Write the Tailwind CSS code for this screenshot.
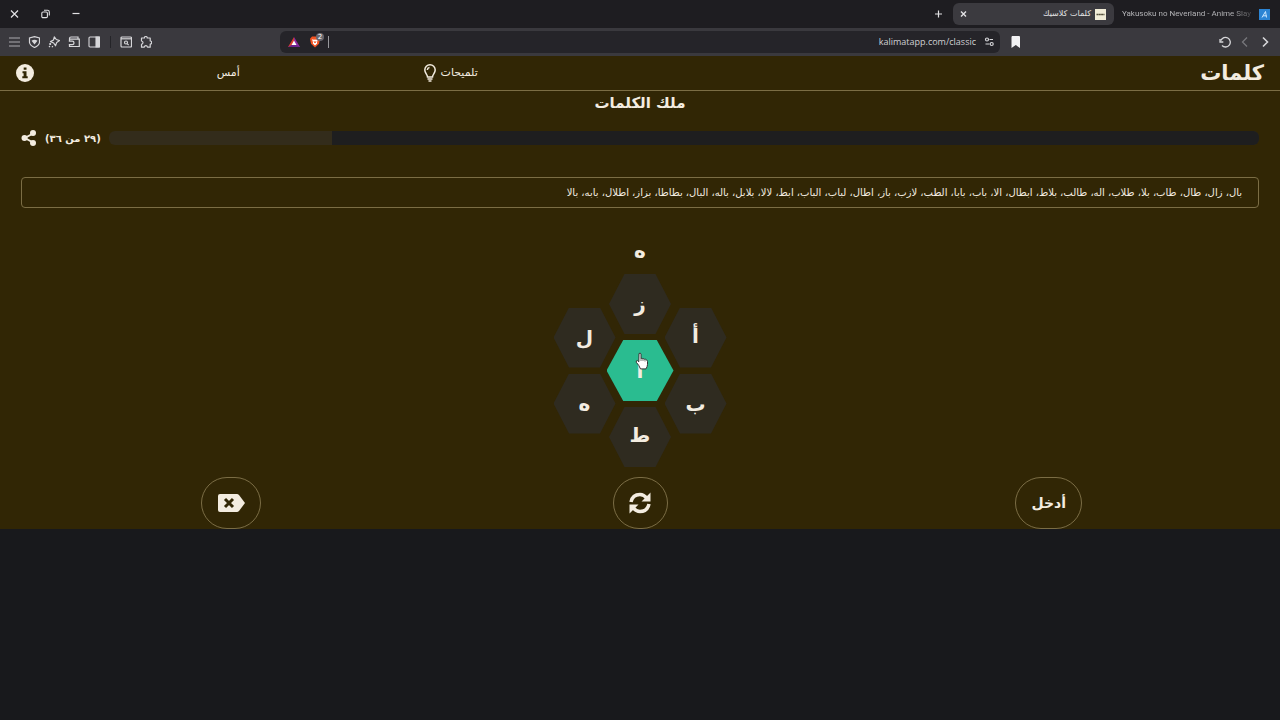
<!DOCTYPE html>
<html lang="ar" dir="rtl">
<head>
<meta charset="utf-8">
<meta name="viewport" content="width=device-width, initial-scale=1">
<title>كلمات كلاسيك</title>
<script src="https://cdn.jsdelivr.net/npm/@tailwindcss/browser@4"></script>
</head>
<body class="min-h-screen bg-[#18191c] font-['DejaVu_Sans',sans-serif] text-[#f3ece0]">

<!-- Tab strip -->
<div dir="ltr" class="flex h-7 items-center bg-[#1e1d21] pl-2 text-[#e2e2e4]">
  <button aria-label="Close window" class="grid size-3 place-items-center"><svg class="size-3" viewBox="0 0 12 12" fill="none" stroke="currentColor" stroke-width="1.2"><path d="M3 2.500l7 7M10 2.500l-7 7"/></svg></button>
  <button aria-label="Restore window" class="ml-5 size-3"><svg class="size-3" viewBox="0 0 12 12" fill="none" stroke="currentColor" stroke-width="1.100"><rect x="1.800" y="4" width="5.600" height="5.600" rx="1.200"/><path d="M4 2.300h3.500q1.800 0 1.800 1.800v3.500"/></svg></button>
  <button aria-label="Minimise window" class="ml-5 size-3"><svg class="size-3" viewBox="0 0 12 12" stroke="currentColor" stroke-width="1.200"><path d="M.5 5.500h7"/></svg></button>
  <button aria-label="New tab" class="ml-auto size-3"><svg class="size-3" viewBox="0 0 12 12" stroke="currentColor" stroke-width="1.200"><path d="M2 6h7M5.500 2.500v7"/></svg></button>
  <div class="ml-2 flex h-[22px] w-[161px] items-center rounded-md bg-[#3b3a3f] pr-2 pl-1">
    <button aria-label="Close tab" class="size-3"><svg class="size-3" viewBox="0 0 12 12" stroke="currentColor" stroke-width="1.400"><path d="M4 3.500l5 5M9 3.500l-5 5"/></svg></button>
    <span dir="rtl" class="ml-auto text-[8px] whitespace-nowrap">كلمات كلاسيك</span>
    <svg class="ml-1 size-[11px]" viewBox="0 0 11 11"><path fill="#f1ecd7" d="M0 0h11v11H0z"/><path d="M1.500 5.500h8" stroke="#55503b" stroke-width="1.600" stroke-dasharray="2 .3"/></svg>
  </div>
  <div class="flex w-[166px] items-center pl-2">
    <span class="bg-linear-to-r from-[#bdbdc0] from-85% to-[#4a4a4d] bg-clip-text font-[Roboto,sans-serif] text-[8px] whitespace-nowrap text-transparent">Yakusoku no Neverland - Anime Slay</span>
    <svg class="mr-[10px] ml-auto size-[11px] shrink-0" viewBox="0 0 11 11"><path fill="#2b84d4" d="M0 0h11v11H0z"/><path d="M3 8.500L6.500 2.500 7.500 8.500M4 6.800h3.500" fill="none" stroke="#c9e6ff"/></svg>
  </div>
</div>

<!-- Toolbar -->
<div dir="ltr" class="flex h-7 items-center bg-[#3a393e] px-2 text-[#d6d6d9]">
  <div class="flex items-center gap-2">
    <button aria-label="Menu" class="size-3"><svg class="size-3" viewBox="0 0 12 12" stroke="#a9a9ad" stroke-width="1.200"><path d="M1 2h11M1 6h11M1 10h11"/></svg></button>
    <button aria-label="VPN" class="size-3"><svg class="size-3" viewBox="0 0 12 12" fill="none" stroke="currentColor" stroke-width="1.200"><path d="M6.500.6L11.500 2v4.500q-.5 3-5 5-4.500-2-5-5V2z"/><path d="M3.500 4.800q3-2 6 0L6.500 8.500z" fill="currentColor" stroke="none"/></svg></button>
    <button aria-label="Assistant" class="size-3"><svg class="size-3" viewBox="0 0 12 12" fill="none" stroke="currentColor" stroke-width="1.200" stroke-linejoin="round"><path d="M6.300.8L8.300 3.500 11.600 4.600 8.700 6.400 7.500 9.800 5.700 7 2.500 5.600 5.500 4z"/><circle cx="2.200" cy="8" r=".5" fill="currentColor"/><path d="M1 11l1-1M4 11.300l.8-1.300"/></svg></button>
    <button aria-label="Wallet" class="size-3"><svg class="size-3" viewBox="0 0 12 12" fill="none" stroke="currentColor" stroke-width="1.200"><path d="M1.500 5V2.500Q1.500 1 3 1h7v2M1.500 3.200h9.800v7.300H1.500V8.800M.8 5.200h3.500q1.700 0 1.700 1.700T4.300 8.600H.8"/></svg></button>
    <button aria-label="Sidebar" class="size-3"><svg class="size-3" viewBox="0 0 12 12" fill="none" stroke="currentColor" stroke-width="1.100"><rect x="1" y="1" width="10.500" height="10" rx="1"/><path d="M8 1h3.500v10H8z" fill="currentColor"/></svg></button>
  </div>
  <div class="ml-[10px] h-3 w-px bg-[#242428]"></div>
  <div class="ml-[9px] flex items-center gap-2">
    <button aria-label="Search tabs" class="size-3"><svg class="size-3" viewBox="0 0 12 12" fill="none" stroke="currentColor" stroke-width="1.200"><rect x="1" y="1" width="10.500" height="10" rx="1"/><path d="M1 2.800h10.500"/><circle cx="6" cy="6.500" r="1.500"/><path d="M7.100 7.600l1.600 1.600"/></svg></button>
    <button aria-label="Extensions" class="size-3"><svg class="size-3" viewBox="0 0 12 12" fill="none" stroke="currentColor" stroke-width="1.200" stroke-linejoin="round"><path d="M1.500 2h3Q4.300.5 5.800.5T7.200 2h3v3q1.500 0 1.500 1.400T10.200 8v3.200H7.500Q7.200 9.700 5.900 9.700t-1.600 1.500H1.500V8.300Q3 8 3 6.600T1.500 5z"/></svg></button>
  </div>
  <div class="ml-32 flex h-[22px] min-w-0 flex-1 items-center rounded-md bg-[#252429] px-1">
    <svg class="ml-1 size-3 shrink-0" viewBox="0 0 12 12"><path d="M6 1L0 11h6z" fill="#d63c2f"/><path d="M6 1l6 10H6z" fill="#8c2aa0"/><path d="M0 11h12L6 7.500z" fill="#6b238e"/><path d="M6 4.500L3.500 9h5z" fill="#fff"/></svg>
    <span class="relative ml-2 block h-4 w-5 shrink-0">
      <svg class="mt-[2px] ml-px size-3" viewBox="0 0 12 12"><path d="M3 .5h6l2 2.300-1 5L6 11.500 2 7.800l-1-5z" fill="#f15322"/><path d="M3 3.200l2 .6 1-.4 1 .4 2-.6-1 3 .2 1.300L6 9.500 3.800 7.500l.2-1.300z" fill="#fff"/><path d="M5 5.200L6 7l1-1.800" stroke="#f15322" fill="none"/></svg>
      <span class="absolute -top-px left-2 grid size-2 place-items-center rounded-sm bg-[#68676e] text-[7px] leading-none text-white">2</span>
    </span>
    <input aria-label="Address" dir="ltr" value="kalimatapp.com/classic" class="h-3 min-w-0 flex-1 border-l border-[#98989c] bg-transparent pr-2 text-right font-['Open_Sans','Noto_Sans',sans-serif] text-[9px] leading-3 text-[#d0d0d3] outline-none">
    <svg class="size-3 shrink-0" viewBox="0 0 12 12" fill="none" stroke="currentColor" stroke-width="1.200"><circle cx="3" cy="3.500" r="1.500"/><path d="M5.500 3.500h3.500M1.500 8h4"/><circle cx="7.700" cy="8" r="1.500"/></svg>
  </div>
  <button aria-label="Bookmark" class="ml-2 size-4"><svg class="size-4" viewBox="0 0 16 16" fill="#f2f2f4"><path d="M4 2h7q1 0 1 1v11L7.800 11 3.500 14V3z"/></svg></button>
  <div class="ml-[195px] flex items-center gap-2">
    <button aria-label="Reload" class="size-3"><svg class="size-3" viewBox="0 0 12 12" fill="none" stroke="currentColor" stroke-width="1.300"><path d="M2 4.500A4.800 4.800 0 1 1 3 9.500M1 3v3h3.300"/></svg></button>
    <button aria-label="Forward" class="size-3"><svg class="size-3" viewBox="0 0 12 12" fill="none" stroke="#77777c" stroke-width="1.300"><path d="M8 1.500L3.500 6 8 10.500"/></svg></button>
    <button aria-label="Back" class="mr-px size-3"><svg class="size-3" viewBox="0 0 12 12" fill="none" stroke="currentColor" stroke-width="1.600"><path d="M4 1.500L8.500 6 4 10.500"/></svg></button>
  </div>
</div>

<main class="bg-[#312605]">
  <header class="flex h-[35px] items-center border-b border-[#7b6d45] px-4">
    <h1 class="ml-auto text-[21px] leading-6 font-bold">كلمات</h1>
    <nav class="flex w-[37%] items-center justify-between">
      <button class="flex items-center gap-1 text-[11px]">تلميحات
        <svg class="h-[18px] w-[14px]" viewBox="0 0 14 18" fill="none" stroke="currentColor" stroke-width="1.500"><path d="M4.500 13C4.500 10.500 1.800 9 1.800 6a5.200 5.200 0 0 1 10.400 0c0 3-2.700 4.500-2.700 7z"/><path d="M4.500 15h5M5.500 17h3M4.300 6Q4.500 3.800 6.500 3.600"/></svg>
      </button>
      <a href="#yesterday" class="text-[11px]">أمس</a>
      <button aria-label="معلومات" class="size-[18px]"><svg class="size-[18px]" viewBox="0 0 18 18"><circle cx="9" cy="9" r="9" fill="currentColor"/><path d="M7.700 3.500h2.800v2.300H7.700zM6.500 7.300h4v5h1.200v1.900H6.300v-1.900h1.300V9.200H6.500z" fill="#312605"/></svg></button>
    </nav>
  </header>

  <h2 class="text-center text-[15px] leading-6 font-bold">ملك الكلمات</h2>

  <section class="mt-[13px] flex h-5 items-center px-[21px]">
    <div role="progressbar" aria-label="الكلمات" aria-valuenow="29" aria-valuemin="0" aria-valuemax="36" class="flex h-[14px] flex-1 overflow-hidden rounded-md bg-[#332c1b]">
      <div class="bg-[#1e1e1f]" style="width:80.55%"></div>
    </div>
    <span class="mr-2 text-[10px] font-bold whitespace-nowrap">(٢٩ من ٣٦)</span>
    <button aria-label="مشاركة" class="mr-2 size-4"><svg class="size-4" viewBox="0 0 16 16" fill="currentColor"><path d="M12 3.500L4 8l8 4.500" fill="none" stroke="currentColor" stroke-width="2"/><circle cx="12" cy="3" r="3"/><circle cx="3.500" cy="8" r="3"/><circle cx="12" cy="13" r="3"/></svg></button>
  </section>

  <p class="mx-[21px] mt-[29px] rounded border border-[#7b6d45] px-4 py-[5px] text-[10px] leading-[19px]">بال، زال، طال، طاب، بلا، طلاب، اله، طالب، بلاط، ابطال، الا، باب، بابا، الطب، لازب، باز، اطال، لباب، الباب، ابط، لالا، بلابل، باله، البال، بطاطا، بزاز، اطلال، بابه، بالا</p>

  <output class="mt-[27px] block text-center text-xl leading-8 font-bold">ه</output>

  <!-- Letter wheel -->
  <div dir="ltr" class="mt-[7px] flex items-center justify-center text-xl font-bold">
    <div class="flex flex-col gap-[6px]">
      <button class="h-[60px] w-[62px] bg-[#2f2b20] [clip-path:polygon(25%_0,75%_0,100%_50%,75%_100%,25%_100%,0_50%)]">ل</button>
      <button class="h-[60px] w-[62px] bg-[#2f2b20] [clip-path:polygon(25%_0,75%_0,100%_50%,75%_100%,25%_100%,0_50%)]">ه</button>
    </div>
    <div class="-mx-[9px] flex flex-col items-center gap-[6px]">
      <button class="h-[60px] w-[62px] bg-[#2f2b20] [clip-path:polygon(25%_0,75%_0,100%_50%,75%_100%,25%_100%,0_50%)]">ز</button>
      <div class="relative h-[61px]">
        <button class="h-[61px] w-[67px] bg-[#2abc90] [clip-path:polygon(25%_0,75%_0,100%_50%,75%_100%,25%_100%,0_50%)]">ا</button>
        <svg class="pointer-events-none absolute top-3 left-7 h-[18px] w-[14px]" viewBox="0 0 14 18"><path d="M4 1.500q1.500-1 2 .5v4.500q1-.7 1.800.3 1-.5 1.700.5 1.300-.4 1.900.6 1.100.2 1.100 1.500v3q0 2-1.500 4.500H5.500Q4 13 1.300 10.300q-.5-1.800 1-1.800l1.500 1.300z" fill="#fff" stroke="#333" stroke-width="1"/><path d="M6 6v3M8 7v2M10 7.500V9.500" stroke="#555" stroke-width=".8"/></svg>
      </div>
      <button class="h-[60px] w-[62px] bg-[#2f2b20] pb-1 [clip-path:polygon(25%_0,75%_0,100%_50%,75%_100%,25%_100%,0_50%)]">ط</button>
    </div>
    <div class="flex flex-col gap-[6px]">
      <button class="h-[60px] w-[62px] bg-[#2f2b20] pb-1 [clip-path:polygon(25%_0,75%_0,100%_50%,75%_100%,25%_100%,0_50%)]">أ</button>
      <button class="h-[60px] w-[62px] bg-[#2f2b20] [clip-path:polygon(25%_0,75%_0,100%_50%,75%_100%,25%_100%,0_50%)]">ب</button>
    </div>
  </div>

  <div class="mt-[10px] grid grid-cols-3 justify-items-center px-[27px]">
    <button class="h-[52px] rounded-full border border-[#7b6d45] px-[15px] text-sm font-bold">أدخل</button>
    <button aria-label="خلط" class="grid h-[52px] w-[55px] place-items-center rounded-full border border-[#7b6d45]"><svg class="size-[22px]" viewBox="0 0 22 22" fill="none" stroke="currentColor" stroke-width="3.500"><path d="M2 10Q3.500 2.500 11 2.500q4 0 7 4M20 12q-1.500 7.500-9 7.500-4 0-7-4"/><path d="M21.500.5v9h-9zM.5 21.500v-9h9z" fill="currentColor" stroke="none"/></svg></button>
    <button aria-label="حذف" class="grid h-[52px] w-[60px] place-items-center rounded-full border border-[#7b6d45]"><svg class="h-[18px] w-[27px]" viewBox="0 0 27 18"><path d="M2 0h17q1 0 2 1l6 8-6 8q-1 1-2 1H2q-2 0-2-2V2Q0 0 2 0z" fill="currentColor"/><path d="M7 5l8 8M15 5l-8 8" stroke="#312605" stroke-width="3"/></svg></button>
  </div>
</main>
</body>
</html>
